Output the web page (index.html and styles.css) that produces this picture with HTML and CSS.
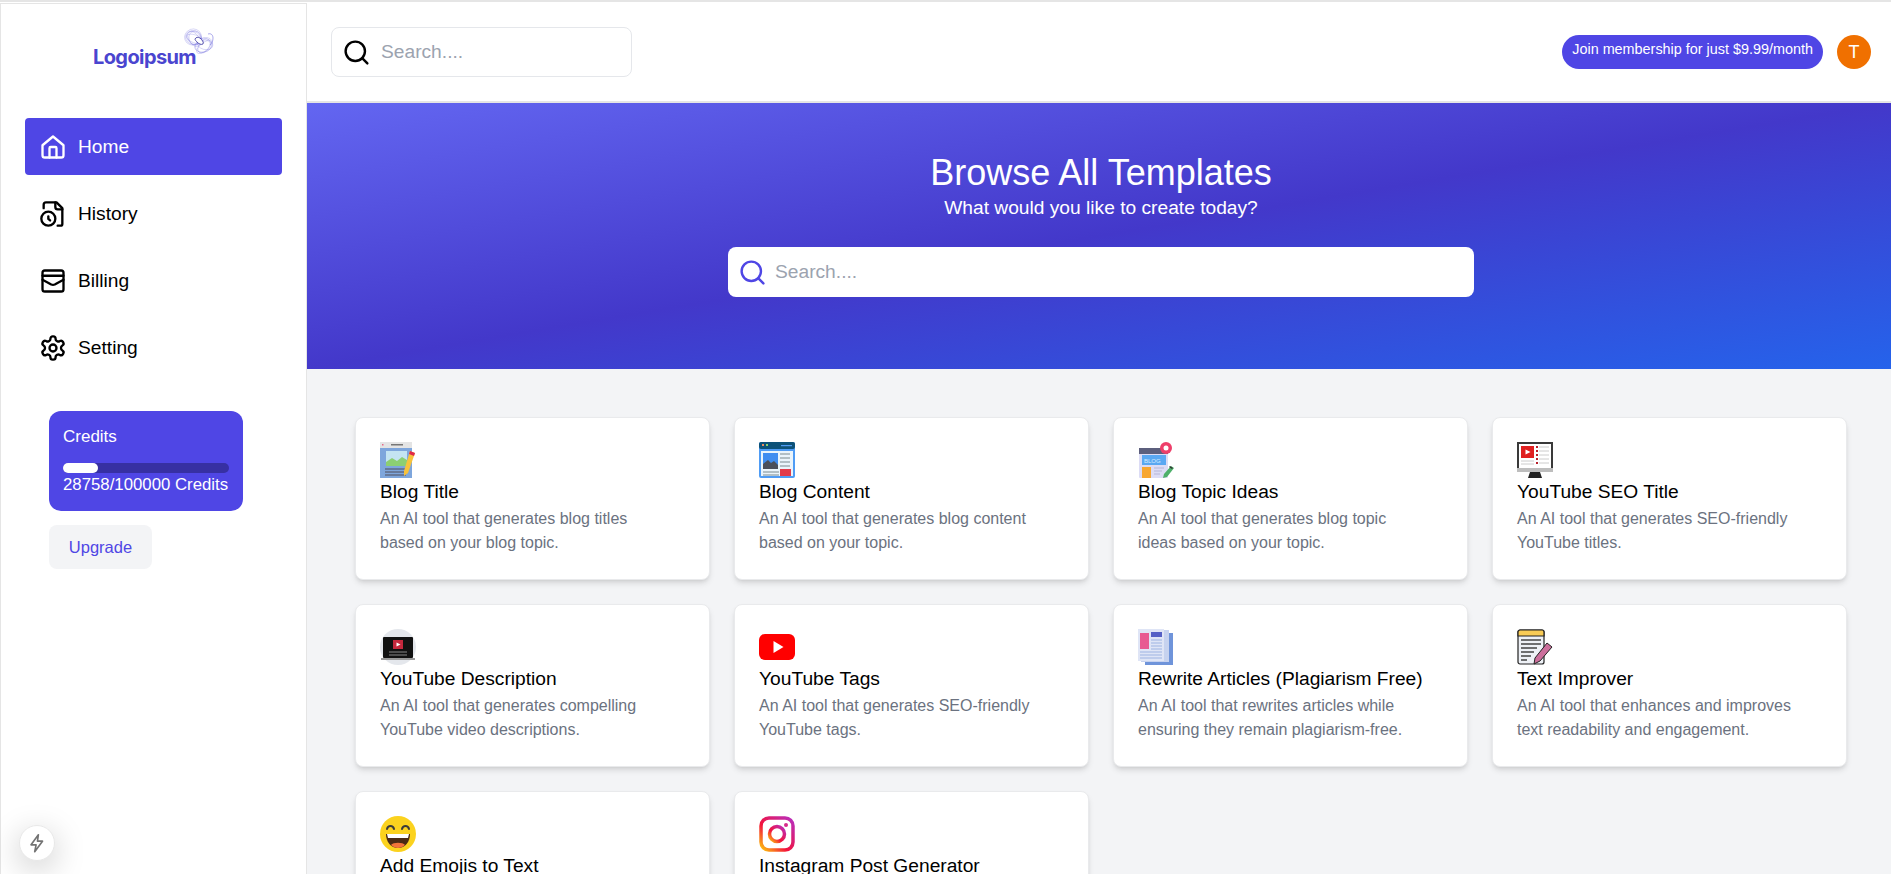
FILE: index.html
```html
<!DOCTYPE html>
<html lang="en">
<head>
    <meta charset="UTF-8">
    <meta name="viewport" content="width=device-width, initial-scale=1.0">
    <title>Browse All Templates</title>
    <link rel="stylesheet" href="styles.css">
</head>
<body>
    <div class="app">
        <aside class="sidebar">
            <div class="logo">
                <span class="logo-text">Logoipsum</span>
                <svg class="logo-mark" viewBox="0 0 30 30" fill="none" stroke="#7470de" stroke-width=".25">
                    <ellipse cx="9" cy="9" rx="8.500" ry="8" transform="rotate(-20 9 9)"/>
                    <ellipse cx="9.500" cy="9.500" rx="8" ry="7" transform="rotate(10 9.500 9.500)"/>
                    <ellipse cx="10" cy="10" rx="8" ry="6" transform="rotate(35 10 10)"/>
                    <ellipse cx="10" cy="11" rx="8.500" ry="5" transform="rotate(55 10 11)"/>
                    <ellipse cx="11" cy="10" rx="7" ry="6" transform="rotate(75 11 10)"/>
                    <ellipse cx="11" cy="11" rx="9" ry="4" transform="rotate(20 11 11)"/>
                    <ellipse cx="20" cy="17" rx="9" ry="7" transform="rotate(-30 20 17)"/>
                    <ellipse cx="19" cy="18" rx="8.500" ry="6" transform="rotate(-10 19 18)"/>
                    <ellipse cx="20" cy="18" rx="8" ry="5" transform="rotate(-55 20 18)"/>
                    <ellipse cx="21" cy="16" rx="8" ry="5.500" transform="rotate(15 21 16)"/>
                    <ellipse cx="20" cy="19" rx="9" ry="4" transform="rotate(-40 20 19)"/>
                    <path d="M24 6c3-1 5 1 5 4s-1 5-3 7" stroke-width=".6"/>
                    <path d="M11 11c1-2 3-2 5-1 2 2 4 4 3 6-2 1-4 0-6-2-1-1-2-2-2-3z" fill="#fff" stroke="#34309c" stroke-width=".8"/>
                </svg>
            </div>
            <nav class="nav">
                <a class="nav-item active" href="#">
                    <svg class="nav-icon" viewBox="0 0 24 24"><path d="M3 10.500 12 3l9 7.500V19a2 2 0 0 1-2 2H5a2 2 0 0 1-2-2z"/><path d="M9 21v-8a1 1 0 0 1 1-1h4a1 1 0 0 1 1 1v8"/></svg>
                    Home
                </a>
                <a class="nav-item" href="#">
                    <svg class="nav-icon" viewBox="0 0 24 24"><path d="M16 22h2.500a1.500 1.500 0 0 0 1.500-1.500V7l-5-5H6a2 2 0 0 0-2 2v3"/><path d="M14 2v4a2 2 0 0 0 2 2h4"/><circle cx="8" cy="16" r="6"/><path d="M9.500 17.500 8 16.250V14"/></svg>
                    History
                </a>
                <a class="nav-item" href="#">
                    <svg class="nav-icon" viewBox="0 0 24 24"><rect x="3" y="3" width="18" height="18" rx="2"/><path d="M3 7.500h18"/><path d="M3 11l7.500 4a4 4 0 0 0 3 0L21 11"/></svg>
                    Billing
                </a>
                <a class="nav-item" href="#">
                    <svg class="nav-icon" viewBox="0 0 24 24"><path d="M12.220 2h-.44a2 2 0 0 0-2 2v.18a2 2 0 0 1-1 1.730l-.43.25a2 2 0 0 1-2 0l-.15-.08a2 2 0 0 0-2.730.73l-.22.380a2 2 0 0 0 .73 2.730l.15.100a2 2 0 0 1 1 1.720v.510a2 2 0 0 1-1 1.740l-.15.090a2 2 0 0 0-.73 2.730l.22.380a2 2 0 0 0 2.730.73l.15-.08a2 2 0 0 1 2 0l.43.25a2 2 0 0 1 1 1.730V20a2 2 0 0 0 2 2h.44a2 2 0 0 0 2-2v-.18a2 2 0 0 1 1-1.730l.43-.25a2 2 0 0 1 2 0l.15.08a2 2 0 0 0 2.730-.73l.22-.390a2 2 0 0 0-.73-2.730l-.15-.080a2 2 0 0 1-1-1.740v-.5a2 2 0 0 1 1-1.740l.15-.090a2 2 0 0 0 .73-2.730l-.22-.380a2 2 0 0 0-2.730-.73l-.15.080a2 2 0 0 1-2 0l-.43-.25a2 2 0 0 1-1-1.730V4a2 2 0 0 0-2-2z"/><circle cx="12" cy="12" r="3"/></svg>
                    Setting
                </a>
            </nav>
            <div class="credits">
                <h2 class="credits-title">Credits</h2>
                <div class="progress"><div class="progress-fill" style="width: 21%"></div></div>
                <p class="credits-count">28758/100000 Credits</p>
            </div>
            <button class="upgrade" type="button">Upgrade</button>
            <button class="dev-badge" type="button" aria-label="Dev tools">
                <svg viewBox="0 0 24 24" fill="none" stroke="#737373" stroke-width="1.800" stroke-linejoin="round" stroke-linecap="round"><path d="M13.500 3 5.500 14H11l-1.500 7.500L18 10h-5.500z"/></svg>
            </button>
        </aside>

        <div class="main">
            <header class="topbar">
                <div class="top-search">
                    <svg class="search-icon" viewBox="0 0 24 24"><circle cx="11" cy="11" r="8"/><path d="m21 21-4.300-4.300"/></svg>
                    <span class="placeholder">Search....</span>
                </div>
                <div class="top-right">
                    <span class="pill">Join membership for just $9.99/month</span>
                    <span class="avatar">T</span>
                </div>
            </header>

            <section class="hero">
                <h1>Browse All Templates</h1>
                <p>What would you like to create today?</p>
                <div class="hero-search">
                    <svg class="search-icon purple" viewBox="0 0 24 24"><circle cx="11" cy="11" r="8"/><path d="m21 21-4.300-4.300"/></svg>
                    <span class="placeholder">Search....</span>
                </div>
            </section>

            <section class="grid">
                <div class="card">
                    <svg class="card-icon" viewBox="0 0 36 36">
                        <rect x="0" y="0" width="32" height="36" fill="#7ea6dc"/>
                        <rect x="0" y="0" width="32" height="6" fill="#e4e4e4"/>
                        <rect x="11" y="2" width="12" height="1.500" fill="#777"/>
                        <rect x="2" y="2" width="1.500" height="1.500" fill="#e86a8a"/>
                        <rect x="6" y="9" width="21" height="15" fill="#c4e4f2"/>
                        <path d="M6 24v-4l6-4 5 3 5-4 5 3v6z" fill="#8ccf72"/>
                        <path d="M5 27h21M5 30h21M5 33h21" stroke="#5f6b85" stroke-width="1.300"/>
                        <path d="M30 9l5 2-7 20-4 3v-5z" fill="#f7c23c"/>
                        <path d="M30 9l5 2-1 3-5-2z" fill="#e0284a"/>
                    </svg>
                    <h3>Blog Title</h3>
                    <p>An AI tool that generates blog titles based on your blog topic.</p>
                </div>
                <div class="card">
                    <svg class="card-icon" viewBox="0 0 36 36">
                        <rect width="36" height="36" rx="2" fill="#4f9cf5"/>
                        <rect width="36" height="7" rx="2" fill="#0d5278"/>
                        <rect x="2" y="9" width="32" height="25" fill="#eaf4fb"/>
                        <rect x="4" y="11" width="15" height="16" fill="#3f8df0"/>
                        <path d="M4 27v-5l5-4 3 3 3-2 4 4v4z" fill="#4a4f5c"/>
                        <path d="M21 12h10M21 16h10M21 20h10M21 24h10M4 30h16M4 33h16" stroke="#7b8a90" stroke-width="1.200"/>
                        <rect x="21" y="27" width="11" height="7" fill="#e23b4b"/>
                        <rect x="3" y="2" width="2" height="2" fill="#ef8a5f"/><rect x="7" y="2" width="2" height="2" fill="#8bd06a"/>
                        <rect x="22" y="3" width="11" height="1.200" fill="#4f9cf5"/>
                    </svg>
                    <h3>Blog Content</h3>
                    <p>An AI tool that generates blog content based on your topic.</p>
                </div>
                <div class="card">
                    <svg class="card-icon" viewBox="0 0 36 36">
                        <rect x="1" y="6" width="29" height="30" rx="1" fill="#dcdcf5"/>
                        <rect x="1" y="6" width="29" height="6" fill="#5c5f7d"/>
                        <rect x="4" y="13" width="24" height="10" fill="#5aa8f2"/>
                        <text class="icon-label" x="6" y="21">BLOG</text>
                        <rect x="4" y="25" width="9" height="11" fill="#f7a732"/>
                        <path d="M16 26h10M16 29h8M16 32h6" stroke="#b5b5d8" stroke-width="1.100"/>
                        <circle cx="28" cy="6" r="6" fill="#ee3f6a"/>
                        <circle cx="28" cy="6" r="2.500" fill="#fff"/>
                        <path d="M33 24l3 2-7 9-4 1 1-4z" fill="#4db06a"/>
                        <path d="M32 24l3 2-1 1-3-2z" fill="#333"/>
                    </svg>
                    <h3>Blog Topic Ideas</h3>
                    <p>An AI tool that generates blog topic ideas based on your topic.</p>
                </div>
                <div class="card">
                    <svg class="card-icon" viewBox="0 0 36 36">
                        <rect width="36" height="30" fill="#3a3a3a"/>
                        <rect x="2" y="2" width="32" height="24" fill="#fff"/>
                        <rect y="26" width="36" height="4" fill="#bdbdbd"/>
                        <path d="M13 30h10l2 6H11z" fill="#222"/>
                        <rect x="4" y="4" width="13" height="12" fill="#e02020"/>
                        <path d="M8.500 7.500l5 2.500-5 2.500z" fill="#fff"/>
                        <path d="M4 19h13M4 22h13" stroke="#ccc" stroke-width="1"/>
                        <path d="M22 5h10M22 9h10M22 13h10M22 17h10M22 21h10" stroke="#ccc" stroke-width="1"/>
                        <path d="M19 4h2v2h-2zM19 8h2v2h-2zM19 12h2v2h-2zM19 16h2v2h-2zM19 20h2v2h-2z" fill="#b8202a"/>
                    </svg>
                    <h3>YouTube SEO Title</h3>
                    <p>An AI tool that generates SEO-friendly YouTube titles.</p>
                </div>

                <div class="card">
                    <svg class="card-icon" viewBox="0 0 36 36">
                        <circle cx="18" cy="18" r="18" fill="#e4e7ec"/>
                        <rect x="3" y="8" width="30" height="21" rx="1" fill="#111"/>
                        <rect x="1" y="29" width="34" height="2" fill="#999"/>
                        <rect x="13" y="11" width="10" height="9" fill="#c5283d"/>
                        <path d="M16.500 13.500l4 2-4 2z" fill="#fff"/>
                        <path d="M9 23h18M9 26h18" stroke="#888" stroke-width="1"/>
                    </svg>
                    <h3>YouTube Description</h3>
                    <p>An AI tool that generates compelling YouTube video descriptions.</p>
                </div>
                <div class="card">
                    <svg class="card-icon" viewBox="0 0 36 36">
                        <rect y="5" width="36" height="26" rx="6" fill="#ff0000"/>
                        <path d="M14.500 12l10 6-10 6z" fill="#fff"/>
                    </svg>
                    <h3>YouTube Tags</h3>
                    <p>An AI tool that generates SEO-friendly YouTube tags.</p>
                </div>
                <div class="card">
                    <svg class="card-icon" viewBox="0 0 36 36">
                        <rect x="7" y="4" width="28" height="32" fill="#6f94da"/>
                        <rect x="3" y="1" width="28" height="32" fill="#c6d2ef"/>
                        <rect width="26" height="32" fill="#dfe5f6"/>
                        <rect x="2" y="4" width="9" height="16" fill="#e85a92"/>
                        <rect x="13" y="3" width="11" height="5" fill="#5560c5"/>
                        <path d="M13 11h11M13 14h11M13 17h11M13 20h11M2 23h22M2 26h22M2 29h22" stroke="#9eb3e2" stroke-width="1.200"/>
                    </svg>
                    <h3>Rewrite Articles (Plagiarism Free)</h3>
                    <p>An AI tool that rewrites articles while ensuring they remain plagiarism-free.</p>
                </div>
                <div class="card">
                    <svg class="card-icon" viewBox="0 0 36 36">
                        <rect x="1" y="1" width="26" height="34" rx="2" fill="#eef1f6" stroke="#222" stroke-width="1.200"/>
                        <path d="M1 7V3a2 2 0 0 1 2-2h22a2 2 0 0 1 2 2v4z" fill="#f8cb55" stroke="#222" stroke-width="1.200"/>
                        <path d="M4 11h20M4 15h20M4 19h16M4 23h13M4 27h10M4 31h6" stroke="#444" stroke-width="1.300"/>
                        <path d="M30 14l5 4-12 14-6 3 1-6z" fill="#cc6f9c" stroke="#222" stroke-width="1"/>
                    </svg>
                    <h3>Text Improver</h3>
                    <p>An AI tool that enhances and improves text readability and engagement.</p>
                </div>

                <div class="card">
                    <svg class="card-icon" viewBox="0 0 36 36">
                        <circle cx="18" cy="18" r="18" fill="#fbd21e"/>
                        <path d="M7 13c1-4 6-4 7 0M22 13c1-4 6-4 7 0" fill="none" stroke="#3a3a3a" stroke-width="2" stroke-linecap="round"/>
                        <path d="M6 18h24c0 8-5 14-12 14S6 26 6 18z" fill="#4a2a14"/>
                        <path d="M7 18h22l-1 4H8z" fill="#fff"/>
                        <path d="M11 29c2-3 12-3 14 0-4 4-10 4-14 0z" fill="#f2743a"/>
                    </svg>
                    <h3>Add Emojis to Text</h3>
                    <p>An AI tool that adds relevant emojis to your text.</p>
                </div>
                <div class="card">
                    <svg class="card-icon" viewBox="0 0 36 36">
                        <defs>
                            <linearGradient id="insta" x1="0" y1="1" x2="1" y2="0">
                                <stop offset="0" stop-color="#fdc70c"/>
                                <stop offset=".4" stop-color="#f3123c"/>
                                <stop offset="1" stop-color="#b82fc0"/>
                            </linearGradient>
                        </defs>
                        <rect x="2" y="2" width="32" height="32" rx="8" fill="none" stroke="url(#insta)" stroke-width="3.500"/>
                        <circle cx="18" cy="18" r="7.500" fill="none" stroke="url(#insta)" stroke-width="3.500"/>
                        <circle cx="27" cy="9" r="2" fill="#d62a8c"/>
                    </svg>
                    <h3>Instagram Post Generator</h3>
                    <p>An AI tool that creates engaging Instagram captions.</p>
                </div>
            </section>
        </div>
    </div>
</body>
</html>
```

FILE: styles.css
```css
* {
    box-sizing: border-box;
}
html, body {
    height: 100%;
    margin: 0;
    overflow: hidden;
}
body {
    font-family: "Liberation Sans", Arial, sans-serif;
    color: #000;
    background-color: #fff;
}
.app {
    display: flex;
    height: 100%;
    border-top: 2px solid #e5e5e5;
}
.sidebar {
    flex: 0 0 307px;
    margin-top: 1px;
    padding: 0 24px;
    background-color: #fff;
    border: 1px solid #e5e5e5;
    border-bottom: none;
}
.logo {
    position: relative;
    width: 140px;
    height: 114px;
    margin-left: 68px;
}
.logo-text {
    position: absolute;
    left: 0;
    top: 39px;
    font-family: Inter, "Liberation Sans", sans-serif;
    font-size: 20px;
    font-weight: 700;
    line-height: 28px;
    letter-spacing: -.6px;
    color: #4a45cf;
}
.logo-mark {
    position: absolute;
    left: 91px;
    top: 24px;
    width: 30px;
    height: 30px;
}
.nav {
    display: flex;
    flex-direction: column;
    gap: 10px;
    width: 257px;
}
.nav-item {
    display: flex;
    align-items: center;
    gap: 11px;
    height: 57px;
    padding: 0 14px;
    border-radius: 4px;
    font-size: 19.2px;
    color: #000;
    text-decoration: none;
}
.nav-item.active {
    background-color: #4f46e5;
    color: #fff;
}
.nav-icon {
    width: 28px;
    height: 28px;
    flex: none;
    fill: none;
    stroke: currentColor;
    stroke-width: 2;
    stroke-linecap: round;
    stroke-linejoin: round;
}
.credits {
    width: 194px;
    height: 100px;
    margin: 35px 0 0 24px;
    padding: 14px;
    background-color: #4f46e5;
    border-radius: 12px;
    color: #fff;
}
.credits-title {
    margin: 0;
    font-size: 17px;
    font-weight: 400;
    line-height: 24px;
}
.progress {
    width: 166px;
    height: 10px;
    margin-top: 14px;
    background-color: #3730a3;
    border-radius: 999px;
}
.progress-fill {
    height: 100%;
    background-color: #fff;
    border-radius: 999px;
}
.credits-count {
    margin: 0;
    font-size: 16.800px;
    line-height: 24px;
    white-space: nowrap;
}
.upgrade {
    display: block;
    width: 103px;
    height: 44px;
    margin: 14px 0 0 24px;
    padding: 0;
    font-family: inherit;
    font-size: 16.500px;
    color: #4f46e5;
    background-color: #f3f4f6;
    border: none;
    border-radius: 8px;
}
.dev-badge {
    position: fixed;
    left: 19px;
    bottom: 13px;
    width: 36px;
    height: 36px;
    padding: 6px;
    background-color: #fff;
    border: 1px solid #e8e8e8;
    border-radius: 50%;
    box-shadow: 0 8px 32px rgba(0, 0, 0, .22);
}
.dev-badge svg {
    display: block;
    width: 100%;
    height: 100%;
}
.main {
    flex: 1;
    min-width: 0;
    background-color: #f3f4f6;
}
.topbar {
    display: flex;
    justify-content: space-between;
    height: 101px;
    padding: 25px 20px 0 24px;
    background-color: #fff;
    border-bottom: 2px solid #e5e5e5;
}
.top-search, .hero-search {
    display: flex;
    align-items: center;
    border-radius: 8px;
}
.top-search {
    width: 301px;
    height: 50px;
    padding-left: 10px;
    gap: 10px;
    border: 1px solid #e5e7eb;
}
.search-icon {
    width: 29px;
    height: 29px;
    flex: none;
    fill: none;
    stroke: #000;
    stroke-width: 2;
    stroke-linecap: round;
    stroke-linejoin: round;
}
.search-icon.purple {
    stroke: #4f46e5;
}
.placeholder {
    font-size: 19.2px;
    color: #9ca3af;
}
.top-right {
    display: flex;
    gap: 14px;
    margin-top: 8px;
}
.pill {
    height: 34px;
    padding: 6px 10px 0;
    font-size: 14.400px;
    line-height: 16px;
    color: #fff;
    background-color: #4f46e5;
    border-radius: 999px;
}
.avatar {
    width: 34px;
    height: 34px;
    font-size: 18px;
    line-height: 34px;
    text-align: center;
    color: #fff;
    background-color: #f07000;
    border-radius: 50%;
}
.hero {
    display: flex;
    flex-direction: column;
    align-items: center;
    height: 266px;
    padding: 50px 0 0 4px;
    color: #fff;
    background: linear-gradient(to bottom right, #6366f1, #4338ca 50%, #2563eb);
}
.hero h1 {
    margin: 0;
    font-size: 36px;
    font-weight: 400;
    line-height: 40px;
}
.hero p {
    margin: 1px 0 0;
    font-size: 19.2px;
    line-height: 28px;
}
.hero-search {
    width: 746px;
    height: 50px;
    margin-top: 25px;
    padding-left: 10px;
    gap: 8px;
    background-color: #fff;
}
.grid {
    display: grid;
    grid-template-columns: repeat(4, 355px);
    gap: 24px;
    padding: 48px 0 0 48px;
}
.card {
    height: 163px;
    padding: 24px;
    background-color: #fff;
    border: 1px solid #e9eaec;
    border-radius: 8px;
    box-shadow: 0 4px 6px -1px rgba(0, 0, 0, .12), 0 2px 4px -2px rgba(0, 0, 0, .1);
}
.card-icon {
    display: block;
    width: 36px;
    height: 36px;
}
.icon-label {
    font-family: "Liberation Sans", sans-serif;
    font-size: 6px;
    fill: #d8ecff;
}
.card h3 {
    margin: 0;
    font-size: 19.2px;
    font-weight: 400;
    line-height: 27px;
    white-space: nowrap;
}
.card p {
    max-width: 290px;
    margin: 2px 0 0;
    font-size: 16px;
    line-height: 24px;
    color: #6b7280;
}
```
